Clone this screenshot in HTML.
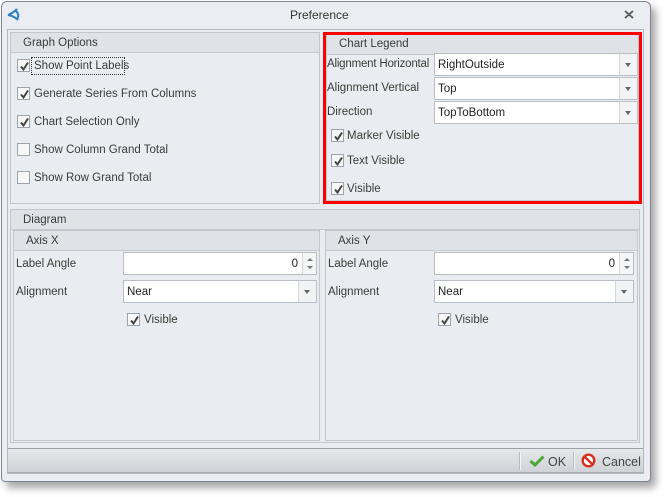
<!DOCTYPE html>
<html><head><style>
*{box-sizing:border-box;margin:0;padding:0}
body{width:667px;height:497px;background:#fff;font-family:"Liberation Sans",sans-serif;font-size:11.5px;color:#3b3b3b;position:relative;overflow:hidden}
.abs{position:absolute}
.win{left:1px;top:1px;width:650px;height:481px;background:#eaedf1;border:1px solid #7d8591;border-radius:6px 6px 4px 4px;box-shadow:5px 6px 8px rgba(0,0,0,.35)}
.inner{left:7px;top:29px;width:637px;height:445px;border:1px solid #b4b9c0;background:#e9ecf0}
.grp{border:1px solid #c3c7cd;background:#e9ecf0}
.hdr{height:20px;background:#dfe2e7;border-bottom:1px solid #c6cad0;padding:4px 0 0 12px;color:#3b3b3b}
.cb{width:13px;height:13px;border:1px solid #9da3ab;background:#f7f7f7}
.cb svg{position:absolute;left:1px;top:1px}
.lbl{white-space:nowrap;margin-top:1px}
.inp{background:#fff;border:1px solid #b9bec5;height:23px;padding:5px 0 0 3px;color:#222}
.dd{position:absolute;right:0;top:0;width:18px;height:21px;border-left:1px solid #d4d7db;background:#f2f3f5}
.dd:after{content:"";position:absolute;left:5px;top:9px;border:3.5px solid transparent;border-top:4px solid #666}
.spin{position:absolute;right:0;top:0;width:14px;height:21px;border-left:1px solid #d4d7db;background:#f5f6f7}
.foot{left:8px;top:448px;width:635px;height:25px;background:linear-gradient(#e6e8eb,#cfd2d6);border-top:1px solid #9aa0a8;border-bottom:1px solid #a8adb4}
</style></head><body>
<div class="abs win"></div>
<svg class="abs" style="left:7px;top:8px" width="16" height="14" viewBox="0 0 16 14"><path d="M1 7 Q6 5 10 1 M1 7 Q7 8 11 12 M9 3 Q13 7 10 11" stroke="#2f7fd0" stroke-width="2" fill="none"/></svg>
<div class="abs" style="left:290px;top:8px;color:#333;font-size:12px">Preference</div>
<svg class="abs" style="left:624px;top:10px" width="10" height="9"><path d="M1 1L9 8M9 1L1 8" stroke="#555" stroke-width="1.8"/></svg>
<div class="abs inner"></div>

<div class="abs grp" style="left:10px;top:32px;width:310px;height:172px"><div class="hdr">Graph Options</div></div>
<div class="abs" style="left:31px;top:57px;width:94px;height:18px;border:1px dotted #333"></div>

<div class="abs grp" style="left:10px;top:209px;width:630px;height:234px"><div class="hdr">Diagram</div></div>
<div class="abs grp" style="left:13px;top:230px;width:307px;height:211px"><div class="hdr">Axis X</div></div>
<div class="abs grp" style="left:325px;top:230px;width:313px;height:211px"><div class="hdr">Axis Y</div></div>

<div class="abs grp" style="left:326px;top:34px;width:313px;height:167px"><div class="hdr" style="padding-top:3px">Chart Legend</div></div>
<div class="abs" style="left:323px;top:32px;width:319px;height:172px;border:3px solid #f00"></div>

<div class="abs cb" style="left:17px;top:59px"><svg width="11" height="11"><path d="M2 5.5L4.5 8.5L9 1.5" stroke="#444" stroke-width="2" fill="none"/></svg></div>
<div class="abs lbl" style="left:34px;top:59px">Show Point Labels</div>
<div class="abs cb" style="left:17px;top:87px"><svg width="11" height="11"><path d="M2 5.5L4.5 8.5L9 1.5" stroke="#444" stroke-width="2" fill="none"/></svg></div>
<div class="abs lbl" style="left:34px;top:87px">Generate Series From Columns</div>
<div class="abs cb" style="left:17px;top:115px"><svg width="11" height="11"><path d="M2 5.5L4.5 8.5L9 1.5" stroke="#444" stroke-width="2" fill="none"/></svg></div>
<div class="abs lbl" style="left:34px;top:115px">Chart Selection Only</div>
<div class="abs cb" style="left:17px;top:143px"></div>
<div class="abs lbl" style="left:34px;top:143px">Show Column Grand Total</div>
<div class="abs cb" style="left:17px;top:171px"></div>
<div class="abs lbl" style="left:34px;top:171px">Show Row Grand Total</div>

<div class="abs lbl" style="left:327px;top:57px;letter-spacing:-0.2px">Alignment Horizontal</div>
<div class="abs inp" style="left:434px;top:53px;width:204px"><span>RightOutside</span><div class="dd"></div></div>
<div class="abs lbl" style="left:327px;top:81px">Alignment Vertical</div>
<div class="abs inp" style="left:434px;top:77px;width:204px"><span>Top</span><div class="dd"></div></div>
<div class="abs lbl" style="left:327px;top:105px">Direction</div>
<div class="abs inp" style="left:434px;top:101px;width:204px"><span>TopToBottom</span><div class="dd"></div></div>
<div class="abs cb" style="left:331px;top:129px"><svg width="11" height="11"><path d="M2 5.5L4.5 8.5L9 1.5" stroke="#444" stroke-width="2" fill="none"/></svg></div>
<div class="abs lbl" style="left:347px;top:129px">Marker Visible</div>
<div class="abs cb" style="left:331px;top:154px"><svg width="11" height="11"><path d="M2 5.5L4.5 8.5L9 1.5" stroke="#444" stroke-width="2" fill="none"/></svg></div>
<div class="abs lbl" style="left:347px;top:154px">Text Visible</div>
<div class="abs cb" style="left:331px;top:182px"><svg width="11" height="11"><path d="M2 5.5L4.5 8.5L9 1.5" stroke="#444" stroke-width="2" fill="none"/></svg></div>
<div class="abs lbl" style="left:347px;top:182px">Visible</div>

<div class="abs lbl" style="left:16px;top:257px">Label Angle</div>
<div class="abs inp" style="left:123px;top:252px;width:194px;text-align:right;padding-right:18px">0<div class="spin"><svg width="14" height="21"><path d="M4 8L7 5L10 8Z M4 13L7 16L10 13Z" fill="#777"/></svg></div></div>
<div class="abs lbl" style="left:16px;top:285px">Alignment</div>
<div class="abs inp" style="left:123px;top:280px;width:194px">Near<div class="dd"></div></div>
<div class="abs cb" style="left:127px;top:313px"><svg width="11" height="11"><path d="M2 5.5L4.5 8.5L9 1.5" stroke="#444" stroke-width="2" fill="none"/></svg></div>
<div class="abs lbl" style="left:144px;top:313px">Visible</div>

<div class="abs lbl" style="left:328px;top:257px">Label Angle</div>
<div class="abs inp" style="left:434px;top:252px;width:200px;text-align:right;padding-right:18px">0<div class="spin"><svg width="14" height="21"><path d="M4 8L7 5L10 8Z M4 13L7 16L10 13Z" fill="#777"/></svg></div></div>
<div class="abs lbl" style="left:328px;top:285px">Alignment</div>
<div class="abs inp" style="left:434px;top:280px;width:200px">Near<div class="dd"></div></div>
<div class="abs cb" style="left:438px;top:313px"><svg width="11" height="11"><path d="M2 5.5L4.5 8.5L9 1.5" stroke="#444" stroke-width="2" fill="none"/></svg></div>
<div class="abs lbl" style="left:455px;top:313px">Visible</div>

<div class="abs foot"></div>
<div class="abs" style="left:519px;top:452px;width:1px;height:18px;background:#b8bcc2;box-shadow:1px 0 #f4f5f6"></div>
<div class="abs" style="left:573px;top:452px;width:1px;height:18px;background:#b8bcc2;box-shadow:1px 0 #f4f5f6"></div>
<svg class="abs" style="left:529px;top:455px" width="16" height="12"><path d="M1.5 6L6 10L14.5 1.5" stroke="#4aa838" stroke-width="3" fill="none"/></svg>
<div class="abs lbl" style="left:548px;top:454px;font-size:12.5px;color:#444">OK</div>
<svg class="abs" style="left:581px;top:453px" width="15" height="15"><circle cx="7.5" cy="7.5" r="5.8" stroke="#d8301c" stroke-width="2.4" fill="#fff"/><path d="M3.5 3.5L11.5 11.5" stroke="#d8301c" stroke-width="2.4"/></svg>
<div class="abs lbl" style="left:602px;top:454px;font-size:12.5px;color:#444">Cancel</div>
</body></html>
